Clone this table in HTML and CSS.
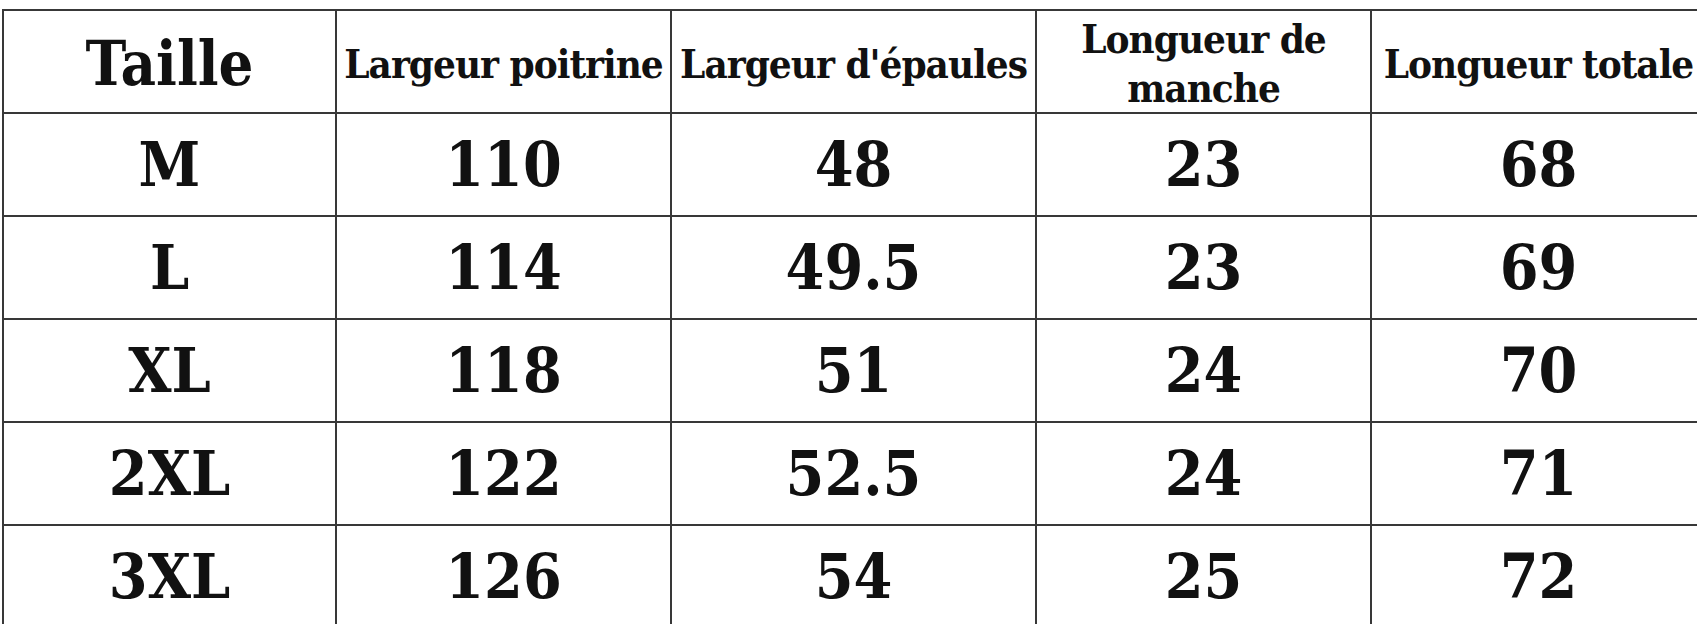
FILE: index.html
```html
<!DOCTYPE html>
<html lang="fr">
<head>
<meta charset="utf-8">
<title>Tableau des tailles</title>
<link rel="stylesheet" href="styles.css">
</head>
<body>
<div class="sheet">
  <table class="sizes">
    <colgroup>
      <col class="c-size">
      <col class="c-chest">
      <col class="c-shoulder">
      <col class="c-sleeve">
      <col class="c-length">
    </colgroup>
    <thead>
      <tr>
        <th class="big">Taille</th>
        <th>Largeur poitrine</th>
        <th>Largeur d'épaules</th>
        <th>Longueur de<br>manche</th>
        <th>Longueur totale</th>
      </tr>
    </thead>
    <tbody>
      <tr><td>M</td><td>110</td><td>48</td><td>23</td><td>68</td></tr>
      <tr><td>L</td><td>114</td><td>49.5</td><td>23</td><td>69</td></tr>
      <tr><td>XL</td><td>118</td><td>51</td><td>24</td><td>70</td></tr>
      <tr><td>2XL</td><td>122</td><td>52.5</td><td>24</td><td>71</td></tr>
      <tr><td>3XL</td><td>126</td><td>54</td><td>25</td><td>72</td></tr>
    </tbody>
  </table>
</div>
</body>
</html>
```
FILE: styles.css
```css
html, body {
  margin: 0;
  padding: 0;
  background: #ffffff;
  overflow: hidden;
}

.sheet {
  padding: 9px 0 0 2px;
}

.sizes {
  border-collapse: collapse;
  table-layout: fixed;
  width: 1703px;
  font-family: "DejaVu Serif Condensed", "DejaVu Serif", serif;
  font-stretch: condensed;
  font-weight: bold;
  color: #111111;
}

.c-size { width: 333px; }
.c-chest { width: 335px; }
.c-shoulder { width: 365px; }
.c-sleeve { width: 335px; }
.c-length { width: 335px; }

.sizes th,
.sizes td {
  border: 2px solid #383838;
  height: 103px;
  padding: 0;
  text-align: center;
  vertical-align: middle;
  box-sizing: border-box;
}

.sizes th {
  font-size: 40px;
  line-height: 49px;
  letter-spacing: -1px;
  padding-top: 3px;
}

.sizes th.big {
  font-size: 61px;
  line-height: 1;
  letter-spacing: 0;
  padding-top: 4px;
}

.sizes td {
  font-size: 62px;
  line-height: 1;
}
```
